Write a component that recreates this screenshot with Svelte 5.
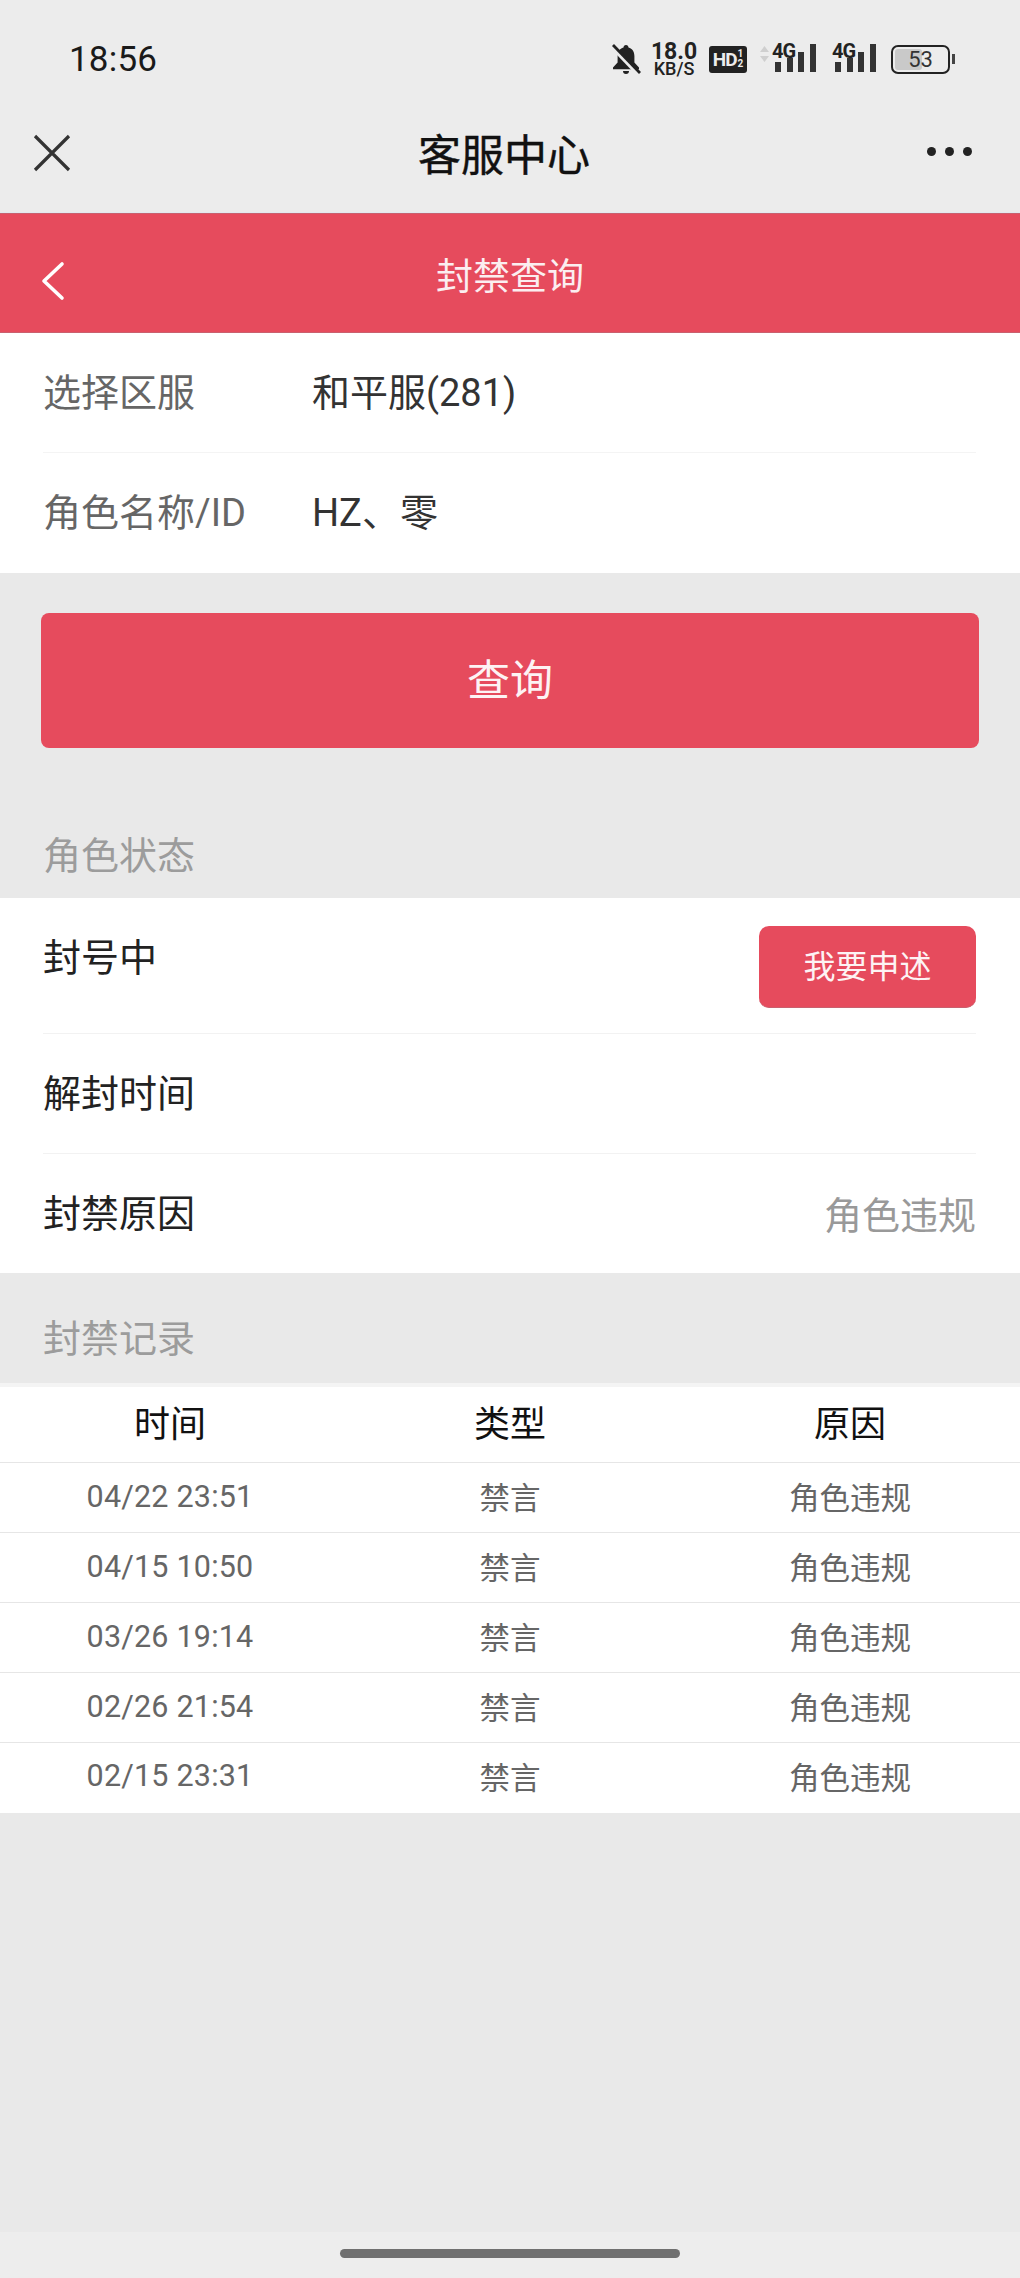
<script>
  // Ban lookup page inside the in-app webview
  const records = [
    { time: '04/22 23:51', type: '禁言', reason: '角色违规' },
    { time: '04/15 10:50', type: '禁言', reason: '角色违规' },
    { time: '03/26 19:14', type: '禁言', reason: '角色违规' },
    { time: '02/26 21:54', type: '禁言', reason: '角色违规' },
    { time: '02/15 23:31', type: '禁言', reason: '角色违规' }
  ];
  const bars = [10, 14, 20, 28];
</script>

{#snippet signal()}
  <div class="signal">
    <span class="signal__tag">4G</span>
    <div class="signal__bars">
      {#each bars as h}
        <i style="height: {h}px"></i>
      {/each}
    </div>
  </div>
{/snippet}

<div class="page">
  <div class="status">
    <span class="status__time">18:56</span>
    <div class="status__icons">
      <svg class="bell" width="30" height="32" viewBox="0 0 30 32">
        <path d="M15 2c-1.600 0-2.400 1-2.500 2.400C8.600 5.400 6.600 8.600 6.600 13v6.500L2 24.500v1.800h26v-1.800l-4.600-5V13c0-4.400-2-7.600-5.900-8.600C17.400 3 16.600 2 15 2zM12 28a3 3 0 0 0 6 0z" fill="#222"/>
        <path d="M1 4l26 27" stroke="#ececec" stroke-width="4"/>
        <path d="M2 2l27 28" stroke="#222" stroke-width="2.800"/>
      </svg>
      <div class="speed">
        <span class="speed__num">18.0</span>
        <span class="speed__unit">KB/S</span>
      </div>
      <div class="hd">
        <span class="hd__txt">HD</span>
        <span class="hd__frac"><b>1</b><b>2</b></span>
      </div>
      <svg class="arrows" width="11" height="18" viewBox="0 0 11 18">
        <path d="M5.500 1L10 7H1zM5.500 17L1 11h9z" fill="#cfcfcf"/>
      </svg>
      {@render signal()}
      <span class="gap"></span>
      {@render signal()}
      <div class="battery">
        <div class="battery__body">
          <span class="battery__fill"></span>
          <span class="battery__num">53</span>
        </div>
        <span class="battery__nub"></span>
      </div>
    </div>
  </div>

  <div class="nav">
    <svg width="38" height="38" viewBox="0 0 38 38" class="nav__close">
      <path d="M2 2l34 34M36 2L2 36" stroke="#333" stroke-width="3.200" fill="none"/>
    </svg>
    <span class="nav__title">客服中心</span>
    <div class="nav__more"><i></i><i></i><i></i></div>
  </div>

  <header class="bar">
    <svg width="26" height="40" viewBox="0 0 26 40" class="bar__back">
      <path d="M22 3L4 20l18 17" stroke="#fff" stroke-width="3.600" fill="none" stroke-linecap="round" stroke-linejoin="round"/>
    </svg>
    <span class="bar__title">封禁查询</span>
  </header>

  <section class="card">
    <div class="field">
      <span class="field__label">选择区服</span>
      <span class="field__value">和平服(281)</span>
    </div>
    <div class="field field--last">
      <span class="field__label">角色名称/ID</span>
      <span class="field__value">HZ、零</span>
    </div>
  </section>

  <div class="query"><button type="button" class="query__btn">查询</button></div>

  <div class="section-label section-label--status">角色状态</div>
  <section class="card">
    <div class="state state--top">
      <span class="state__title">封号中</span>
      <button type="button" class="state__btn">我要申述</button>
    </div>
    <div class="state">
      <span>解封时间</span>
    </div>
    <div class="state state--last">
      <span>封禁原因</span>
      <span class="state__val">角色违规</span>
    </div>
  </section>

  <div class="section-label section-label--log">封禁记录</div>
  <section class="log">
    <div class="log__row log__row--head">
      <span>时间</span><span>类型</span><span>原因</span>
    </div>
    {#each records as r}
      <div class="log__row">
        <span class="log__time">{r.time}</span><span>{r.type}</span><span>{r.reason}</span>
      </div>
    {/each}
  </section>

  <div class="home"><span class="home__pill"></span></div>
</div>

<style>
  :global(body) {
    margin: 0;
    background: #e9e9e9;
  }
  .page {
    display: flex;
    flex-direction: column;
    min-height: 2278px;
    font-family: Roboto, "Noto Sans CJK SC", sans-serif;
    color: #222;
  }

  .status {
    display: flex;
    align-items: center;
    justify-content: space-between;
    box-sizing: border-box;
    height: 92px;
    padding: 26px 65px 0 69px;
    background: #ececec;
  }
  .status__time {
    font-size: 35px;
    color: #1a1a1a;
    letter-spacing: 0.2px;
  }
  .status__icons {
    display: flex;
    align-items: center;
  }
  .bell { margin-right: 10px; }
  .speed {
    display: flex;
    flex-direction: column;
    align-items: center;
    width: 46px;
    margin-right: 12px;
    color: #222;
  }
  .speed__num {
    font-size: 23px;
    font-weight: 700;
    line-height: 18px;
  }
  .speed__unit {
    font-size: 18px;
    font-weight: 500;
    line-height: 15px;
  }
  .hd {
    display: flex;
    align-items: center;
    justify-content: center;
    gap: 1px;
    box-sizing: border-box;
    width: 38px;
    height: 27px;
    margin-right: 12px;
    background: #222;
    border-radius: 3px;
    color: #ececec;
    font-weight: 700;
  }
  .hd__txt { font-size: 19px; letter-spacing: -1px; }
  .hd__frac {
    display: flex;
    flex-direction: column;
    font-size: 10px;
    line-height: 10px;
  }
  .hd__frac b { font-weight: 700; }
  .arrows { margin: 0 2px 10px 0; }
  .signal {
    position: relative;
    display: flex;
    flex-direction: column;
    width: 44px;
    height: 28px;
    margin-bottom: 2px;
  }
  .signal__tag {
    position: absolute;
    left: 0;
    top: -3px;
    font-size: 20px;
    font-weight: 700;
    letter-spacing: -1px;
    line-height: 20px;
    color: #222;
  }
  .signal__bars {
    display: flex;
    align-items: flex-end;
    justify-content: space-between;
    height: 100%;
    margin-left: 3px;
  }
  .signal__bars i {
    display: block;
    width: 6px;
    background: #333;
  }
  .gap { width: 16px; }
  .battery {
    display: flex;
    align-items: center;
    gap: 2px;
    margin-left: 15px;
  }
  .battery__body {
    position: relative;
    display: flex;
    align-items: center;
    justify-content: center;
    box-sizing: border-box;
    width: 59px;
    height: 29px;
    border: 2px solid #222;
    border-radius: 7px;
    overflow: hidden;
  }
  .battery__fill {
    position: absolute;
    left: 2px;
    top: 2px;
    bottom: 2px;
    width: 27px;
    background: #c9c9c9;
    border-radius: 3px;
  }
  .battery__num {
    position: relative;
    font-size: 22px;
    color: #333;
  }
  .battery__nub {
    width: 3px;
    height: 10px;
    background: #444;
  }

  .nav {
    position: relative;
    display: flex;
    align-items: center;
    justify-content: space-between;
    box-sizing: border-box;
    height: 121px;
    padding: 0 48px 0 33px;
    background: #ececec;
    border-bottom: 1px solid #e3e9f0;
  }
  .nav__close { margin-top: 1px; }
  .nav__title {
    position: absolute;
    left: 0;
    right: 12px;
    text-align: center;
    font-size: 43px;
    color: #111;
    -webkit-text-stroke: 0.4px #111;
  }
  .nav__more {
    display: flex;
    gap: 9px;
    margin-top: -2px;
  }
  .nav__more i {
    display: block;
    width: 9px;
    height: 9px;
    border-radius: 50%;
    background: #222;
  }

  .bar {
    position: relative;
    display: flex;
    align-items: center;
    justify-content: center;
    box-sizing: border-box;
    height: 120px;
    background: #e64b5d;
    border-top: 1px solid #c9606e;
    border-bottom: 1px solid #c9606e;
  }
  .bar__back {
    position: absolute;
    left: 40px;
    top: 47px;
  }
  .bar__title {
    font-size: 37px;
    color: #fbeef0;
    margin-top: 2px;
  }

  .card {
    background: #fff;
  }
  .field {
    display: flex;
    align-items: center;
    box-sizing: border-box;
    height: 120px;
    padding-bottom: 6px;
    margin-left: 43px;
    margin-right: 44px;
    border-bottom: 1px solid #f4f4f4;
    font-size: 38px;
  }
  .field--last {
    padding-bottom: 8px;
    border-bottom: 0;
  }
  .field__label {
    width: 269px;
    color: #666;
    white-space: nowrap;
  }
  .field__value { color: #333; }

  .query {
    padding: 40px 41px 0;
  }
  .query__btn {
    display: block;
    width: 100%;
    height: 135px;
    padding: 0 0 7px;
    border: 0;
    border-radius: 8px;
    background: #e64b5d;
    color: #fdf3f4;
    font-family: inherit;
    font-size: 43px;
  }

  .section-label {
    display: flex;
    align-items: flex-end;
    box-sizing: border-box;
    padding: 0 44px 18px 43px;
    font-size: 38px;
    color: #9c9c9c;
  }
  .section-label--status { height: 150px; }
  .section-label--log {
    height: 110px;
    padding-bottom: 20px;
  }

  .state {
    display: flex;
    align-items: center;
    justify-content: space-between;
    box-sizing: border-box;
    height: 120px;
    padding-bottom: 6px;
    margin: 0 44px 0 43px;
    border-bottom: 1px solid #f2f2f2;
    font-size: 38px;
    color: #222;
  }
  .state--top {
    align-items: flex-start;
    height: 136px;
    padding-top: 28px;
    padding-bottom: 0;
  }
  .state__title {
    line-height: 56px;
    margin-top: 4px;
  }
  .state--last {
    height: 119px;
    padding-bottom: 7px;
    border-bottom: 0;
  }
  .state__btn {
    width: 217px;
    height: 82px;
    padding: 0 0 5px;
    border: 0;
    border-bottom: 1px solid #c9606e;
    border-radius: 10px;
    background: #e64b5d;
    color: #fdf3f4;
    font-family: inherit;
    font-size: 32px;
  }
  .state__val {
    color: #999;
    margin-top: 4px;
  }

  .log {
    background: #fff;
    border-top: 4px solid #f4f4f4;
  }
  .log__row {
    display: grid;
    grid-template-columns: repeat(3, 1fr);
    align-items: center;
    box-sizing: border-box;
    height: 70px;
    padding-bottom: 3px;
    text-align: center;
    font-size: 30.500px;
    color: #666;
    border-bottom: 1px solid #e6e6e6;
  }
  .log__row:last-child {
    padding-bottom: 5px;
    border-bottom: 0;
  }
  .log__row--head {
    height: 76px;
    padding-bottom: 8px;
    font-size: 36px;
    color: #111;
  }
  .log__time { letter-spacing: 0.2px; }

  .home {
    display: flex;
    justify-content: center;
    box-sizing: border-box;
    height: 46px;
    margin-top: auto;
    padding-top: 17px;
    background: #ededed;
  }
  .home__pill {
    width: 340px;
    height: 9px;
    border-radius: 5px;
    background: #707070;
  }
</style>
